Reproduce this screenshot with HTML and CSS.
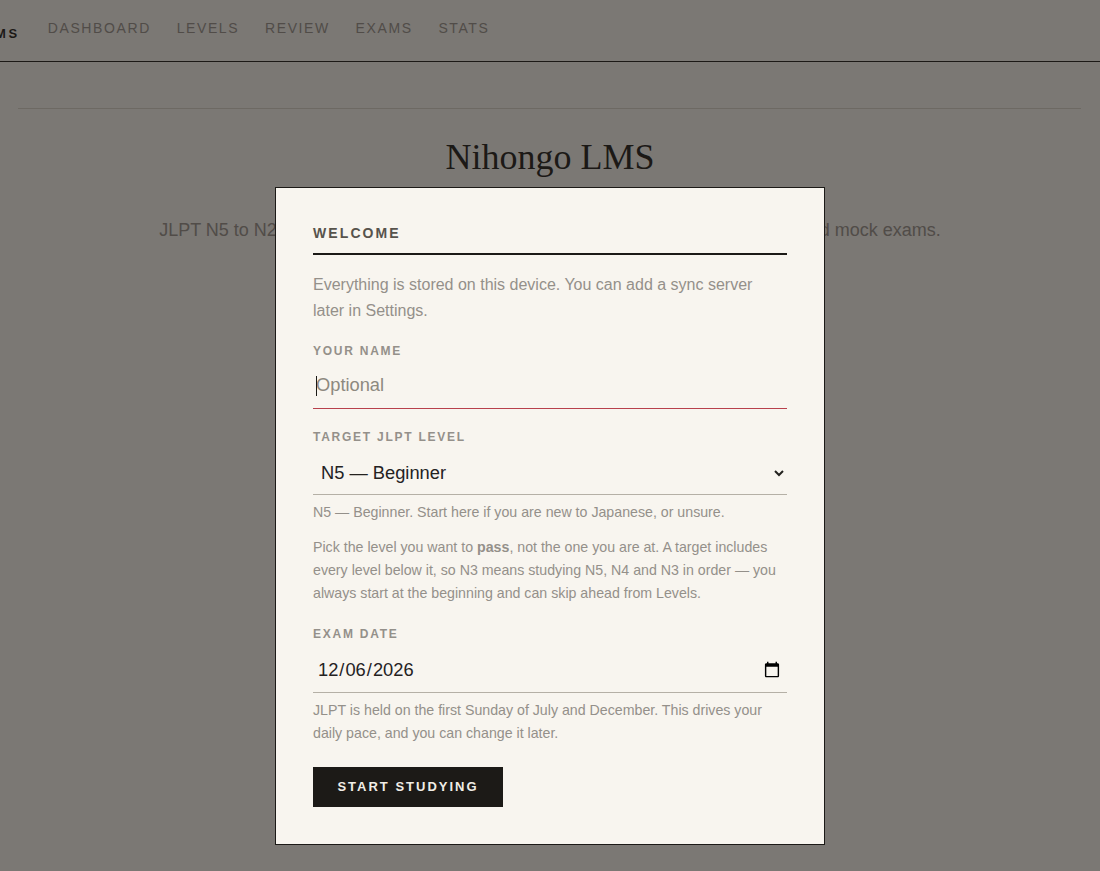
FILE: index.html
```html
<!DOCTYPE html>
<html lang="en">
<head>
<meta charset="utf-8">
<title>Nihongo LMS</title>
<link rel="stylesheet" href="styles.css">
</head>
<body>
<header class="topbar">
  <a class="brand">Nihongo LMS</a>
  <nav class="nav">
    <a>Dashboard</a><a>Levels</a><a>Review</a><a>Exams</a><a>Stats</a>
  </nav>
</header>
<main class="page">
  <div class="rule"></div>
  <h1 class="title">Nihongo LMS</h1>
  <p class="lead">JLPT N5 to N2 vocabulary, kanji &amp; grammar, spaced repetition, graded readings and mock exams.</p>
</main>
<div class="overlay">
  <form class="modal">
    <h2 class="modal-title">Welcome</h2>
    <p class="intro">Everything is stored on this device. You can add a sync server later in Settings.</p>
    <label class="label" for="name">Your name</label>
    <div class="name-wrap">
      <input class="field name-field" id="name" type="text" placeholder="Optional">
      <span class="caret"></span>
    </div>
    <label class="label level-label" for="level">Target JLPT level</label>
    <select class="field select-field" id="level">
      <option>N5 — Beginner</option>
      <option>N4 — Elementary</option>
      <option>N3 — Intermediate</option>
      <option>N2 — Advanced</option>
    </select>
    <p class="hint hint-first">N5 — Beginner. Start here if you are new to Japanese, or unsure.</p>
    <p class="hint hint-second">Pick the level you want to <strong>pass</strong>, not the one you are at. A target includes every level below it, so N3 means studying N5, N4 and N3 in order — you always start at the beginning and can skip ahead from Levels.</p>
    <label class="label date-label" for="date">Exam date</label>
    <input class="field date-field" id="date" type="date" value="2026-12-06">
    <p class="hint hint-first">JLPT is held on the first Sunday of July and December. This drives your daily pace, and you can change it later.</p>
    <button class="start" type="button">Start studying</button>
  </form>
</div>
</body>
</html>
```

FILE: styles.css
```css
* { box-sizing: border-box; }
html, body { margin: 0; height: 871px; overflow: hidden; }
body {
  background: #f8f5ef;
  color: #1c1a17;
  font-family: "Liberation Sans", Arial, sans-serif;
}
.topbar {
  display: flex;
  align-items: center;
  height: 62px;
  border-bottom: 1px solid #1c1a17;
  padding-bottom: 5px;
  margin-left: -102px;
}
.brand {
  font-size: 13px;
  font-weight: 700;
  letter-spacing: 2.6px;
  text-transform: uppercase;
  margin-top: 11px;
  white-space: nowrap;
}
.nav { display: flex; gap: 25.8px; margin-left: 28px; }
.nav a {
  font-size: 14px;
  letter-spacing: 1.6px;
  text-transform: uppercase;
  color: #96918a;
}
.page { padding: 46px 18px 0; text-align: center; }
.rule { border-top: 1px solid #d8d3c8; margin-right: 1px; }
.title {
  font-family: "Liberation Serif", "Times New Roman", serif;
  font-weight: 400;
  font-size: 36px;
  line-height: 42px;
  margin: 27px 0 0;
}
.lead { font-size: 18px; line-height: 24px; color: #96918a; margin: 40px 0 0; }
.overlay {
  position: fixed;
  inset: 0;
  background: rgba(29, 25, 22, 0.57);
  display: flex;
  justify-content: center;
  align-items: flex-start;
  padding-top: 187px;
}
.modal {
  width: 550px;
  height: 658px;
  background: #f8f5ef;
  border: 1px solid #1c1a17;
  padding: 35px 37px;
  display: flex;
  flex-direction: column;
  align-items: stretch;
}
.modal-title {
  font-size: 14px;
  line-height: 20px;
  font-weight: 700;
  letter-spacing: 2.1px;
  text-transform: uppercase;
  color: #57534c;
  margin: 0;
  padding-bottom: 10px;
  border-bottom: 2px solid #1c1a17;
}
.intro { font-size: 16px; line-height: 26px; color: #94908a; margin: 17px 0 0; }
.label {
  display: block;
  font-size: 12px;
  line-height: 16px;
  font-weight: 700;
  letter-spacing: 1.75px;
  text-transform: uppercase;
  color: #94908a;
  margin-top: 19px;
}
.level-label { margin-top: 20px; }
.date-label { margin-top: 21px; }
.field {
  width: 100%;
  border: 0;
  border-bottom: 1px solid #b5b0a6;
  background: transparent;
  color: #24221f;
  font-family: "Liberation Sans", Arial, sans-serif;
  font-size: 18.3px;
  outline: 0;
  border-radius: 0;
}
.name-wrap { position: relative; }
.name-field {
  display: block;
  height: 50px;
  padding: 2px 3px 0;
  border-bottom: 1px solid #b8404c;
}
.name-field::placeholder { color: #8d897f; opacity: 1; }
.caret {
  position: absolute;
  left: 3px;
  top: 17px;
  width: 1px;
  height: 20px;
  background: #1c1a17;
}
.select-field { height: 43px; margin-top: 7px; padding: 0 5px 2px 4px; }
.date-field { height: 44px; margin-top: 7px; padding: 0 4px 1px; }
.hint { font-size: 14.2px; line-height: 23px; color: #94908a; margin: 0; }
.hint-first { margin-top: 6px; }
.hint-second { margin-top: 12px; }
.start {
  align-self: flex-start;
  height: 40px;
  width: 190px;
  margin-top: 22px;
  border: 1px solid #1c1a17;
  background: #1c1a17;
  color: #f0ede6;
  font-family: "Liberation Sans", Arial, sans-serif;
  font-size: 13px;
  font-weight: 700;
  letter-spacing: 2px;
  text-transform: uppercase;
  border-radius: 0;
  padding: 0 0 2px;
}
```
